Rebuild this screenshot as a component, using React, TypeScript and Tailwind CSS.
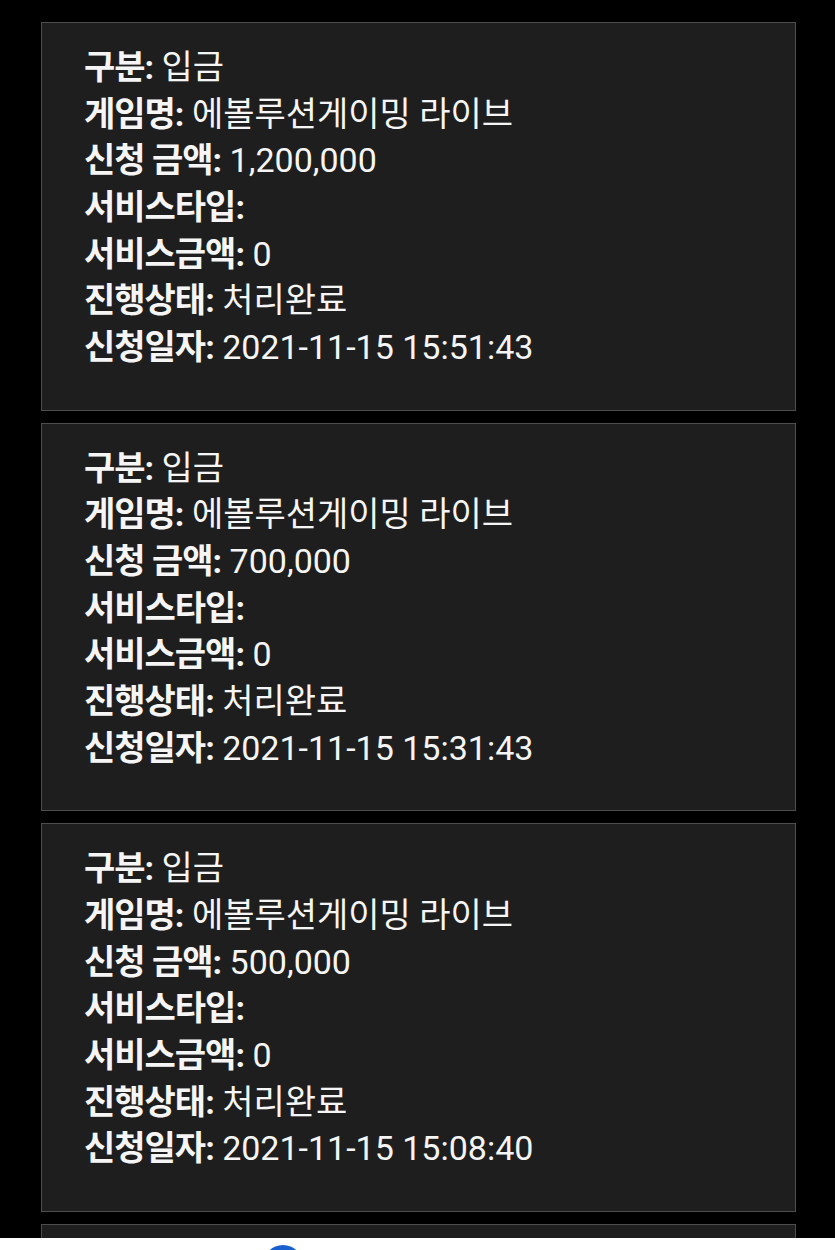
const rows = [
  { amount: "1,200,000", date: "2021-11-15 15:51:43" },
  { amount: "700,000", date: "2021-11-15 15:31:43" },
  { amount: "500,000", date: "2021-11-15 15:08:40" },
];

const Line = ({ label, value }: { label: string; value: string }) => (
  <p>
    <span className="font-bold tracking-[-1px]">{label}:</span> {value}
  </p>
);

const Card = ({ amount, date }: { amount: string; date: string }) => (
  <div className="w-[755px] shrink-0 border border-[#4d4d4d] bg-[#1e1e1e] pl-[42px] pt-[21px] pb-[39px] text-[34px] leading-[46.67px] text-[#f5f5f5]">
    <Line label="구분" value="입금" />
    <Line label="게임명" value="에볼루션게이밍 라이브" />
    <Line label="신청 금액" value={amount} />
    <Line label="서비스타입" value="" />
    <Line label="서비스금액" value="0" />
    <Line label="진행상태" value="처리완료" />
    <Line label="신청일자" value={date} />
  </div>
);

export default function App() {
  return (
    <div
      className="relative h-[1250px] overflow-hidden bg-black"
      style={{ fontFamily: "Roboto, 'Noto Sans CJK KR', sans-serif" }}
    >
      <div className="flex flex-col gap-[12px] pl-[41px] pt-[22px]">
        {rows.map((r, i) => (
          <Card key={i} amount={r.amount} date={r.date} />
        ))}
        <Card amount="300,000" date="2021-11-15 14:50:12" />
      </div>
      {/* bottom bar peeking in */}
      <div className="absolute bottom-0 left-0 right-0 h-[12px] overflow-hidden bg-white">
        <div className="ml-[263px] mt-[7px] h-[40px] w-[40px] rounded-full bg-[#1a5fd0]" />
      </div>
    </div>
  );
}
